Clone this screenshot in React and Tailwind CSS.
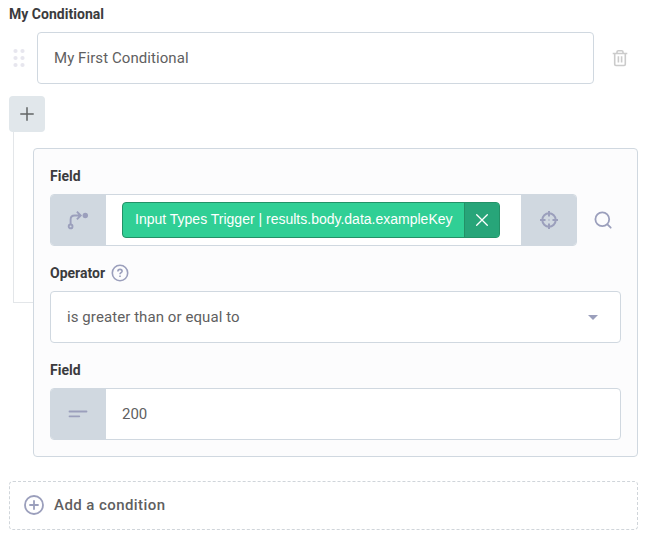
function Label({ children }) {
  return (
    <div className="flex h-5 items-center text-sm font-bold leading-5 text-[#3b3b3d]">{children}</div>
  );
}

function Grip() {
  return (
    <svg width="12" height="20" viewBox="0 0 12 20" fill="#e7e6ee">
      {[3, 10, 17].map((y) => (
        <g key={y}>
          <circle cx="2.5" cy={y} r="2.1" />
          <circle cx="9.5" cy={y} r="2.1" />
        </g>
      ))}
    </svg>
  );
}

function Trash() {
  return (
    <svg width="16" height="18" viewBox="0 0 16 18" fill="none" stroke="#cbcbcb" strokeWidth="1.6">
      <path d="M.7 4.5h14.6M5 4.3V3c0-.8.5-1.3 1.3-1.3h3.4c.8 0 1.3.5 1.3 1.3v1.3M2.7 4.7v10.6c0 .8.4 1.2 1.2 1.2h8.2c.8 0 1.2-.4 1.2-1.2V4.7M6.4 7.2v6.4M9.6 7.2v6.4" />
    </svg>
  );
}

function Branch() {
  return (
    <svg width="23" height="20" viewBox="0 0 23 20" fill="none" stroke="#9b9fbc" strokeWidth="1.9">
      <circle cx="3.6" cy="16.4" r="1.9" />
      <path d="M3.6 14.2V9.6Q3.6 5.5 7.6 5.5H13M9.9 1.7l3.8 3.8-3.8 3.8" />
      <circle cx="18.3" cy="5.5" r="2.7" fill="#9b9fbc" stroke="none" />
    </svg>
  );
}

function Target() {
  return (
    <svg width="18" height="18" viewBox="0 0 18 18" fill="none" stroke="#9b9fbc" strokeWidth="2">
      <circle cx="9" cy="9" r="6.7" />
      <path d="M9 0v5.5M9 12.5V18M0 9h5.5M12.5 9H18" />
      <path d="M8.3 9h1.4" strokeWidth="1.3" opacity=".7" />
    </svg>
  );
}

export default function App() {
  return (
    <div className="h-[541px] w-[651px] overflow-hidden bg-white font-[Roboto,sans-serif] text-[#5f5f61]">
      <div className="pl-[9px] pt-1 tracking-[0.03px]">
        <Label>My Conditional</Label>
      </div>

      <div className="mt-2 flex h-[52px] items-center">
        <div className="flex w-[37px] pl-[13px]"><Grip /></div>
        <div className="flex h-full w-[557px] items-center rounded border border-[#d0d8e0] px-4 text-[15px] tracking-[0.07px]">
          My First Conditional
        </div>
        <div className="ml-[18px]"><Trash /></div>
      </div>

      <div className="ml-[9px] mt-3 flex size-9 items-center justify-center rounded bg-[#e1e7eb]">
        <svg width="14" height="14" viewBox="0 0 14 14" stroke="#626666" strokeWidth="1.5" strokeLinecap="round">
          <path d="M7 .8v12.4M.8 7h12.4" />
        </svg>
      </div>

      <div className="flex items-start">
        <div className="ml-[13px] h-[171px] w-5 border-b border-l border-[#e3e6e9]" />
        <div className="mt-4 w-[605px] rounded border border-[#d0d8e0] bg-[#fcfcfd] px-4 pb-4 pt-[17px]">
          <Label>Field</Label>
          <div className="mt-2 flex h-[52px] items-center">
            <div className="flex h-full w-[527px] overflow-hidden rounded border border-[#d0d8e0] bg-white">
              <div className="flex w-[55px] items-center justify-center bg-[#d0d8e0]"><Branch /></div>
              <div className="flex flex-1 items-center pl-4">
                <div className="flex h-9 w-[378px] overflow-hidden rounded border border-[#239167] bg-[#30cf95] font-['Liberation_Sans',sans-serif] text-[14px] text-white">
                  <div className="flex flex-1 items-center whitespace-nowrap pb-0.5 pl-3">
                    Input Types Trigger | results.body.data.exampleKey
                  </div>
                  <div className="flex w-[35px] items-center justify-center border-l border-[#239167] bg-[#27a579]">
                    <svg width="12" height="12" viewBox="0 0 12 12" stroke="white" strokeWidth="1.3" strokeLinecap="round">
                      <path d="M.7.7l10.6 10.6M11.3.7L.7 11.3" />
                    </svg>
                  </div>
                </div>
              </div>
              <div className="flex w-[55px] items-center justify-center bg-[#d0d8e0]"><Target /></div>
            </div>
            <svg className="ml-[17px]" width="18" height="18" viewBox="0 0 18 18" fill="none" stroke="#9b9fbc" strokeWidth="1.8" strokeLinecap="round">
              <circle cx="8.3" cy="8.3" r="6.9" />
              <path d="M13.4 13.4l3.3 3.3" />
            </svg>
          </div>

          <div className="mt-[17px] flex items-center">
            <Label>Operator</Label>
            <div className="ml-1.5 flex size-[18px] items-center justify-center">
              <svg width="18" height="18" viewBox="0 0 18 18" fill="none" stroke="#9b9fbc" strokeWidth="1.6">
                <circle cx="9" cy="9" r="7.7" />
                <path d="M6.9 7.4c0-1.2.9-2 2.1-2s2.1.7 2.1 1.8c0 1.5-2.1 1.5-2.1 3.1M9 11.5v1.5" />
              </svg>
            </div>
          </div>
          <div className="mt-2 flex h-[52px] items-center justify-between rounded border border-[#d0d8e0] bg-white pl-4 pr-[22px] text-[15px] tracking-[0.08px]">
            is greater than or equal to
            <svg width="10" height="5" viewBox="0 0 10 5" fill="#9b9fbc"><path d="M0 0h10L5 5z" /></svg>
          </div>

          <div className="mt-[17px]"><Label>Field</Label></div>
          <div className="mt-2 flex h-[52px] overflow-hidden rounded border border-[#d0d8e0] bg-white">
            <div className="flex w-[55px] items-center justify-center bg-[#d0d8e0] pr-px">
              <svg width="20" height="8" viewBox="0 0 20 8" stroke="#9b9fbc" strokeWidth="1.8" strokeLinecap="round">
                <path d="M1.5 1.5h17M1.5 6.3h9.8" />
              </svg>
            </div>
            <div className="flex items-center pl-4 text-[15px]">200</div>
          </div>
        </div>
      </div>

      <div className="ml-[9px] mt-6 flex h-[49px] w-[629px] items-center rounded border border-dashed border-[#d0d5da] pb-px pl-3.5 text-[15px] font-medium tracking-[0.43px]">
        <svg className="mr-2.5" width="20" height="20" viewBox="0 0 20 20" fill="none" stroke="#9b9fbc" strokeWidth="1.8" strokeLinecap="round">
          <circle cx="10" cy="10" r="9" />
          <path d="M10 6v8M6 10h8" />
        </svg>
        Add a condition
      </div>
    </div>
  );
}
